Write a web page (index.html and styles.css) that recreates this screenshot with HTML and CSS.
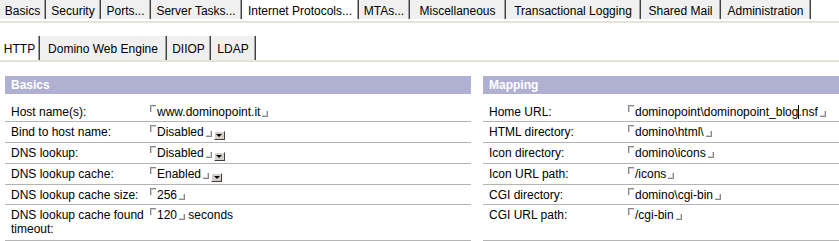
FILE: index.html
```html
<!DOCTYPE html>
<html>
<head>
<meta charset="utf-8">
<title>Server document - Internet Protocols - HTTP</title>
<link rel="stylesheet" href="styles.css">
</head>
<body>
<div class="tabbar main">
  <div class="tab t-basics">Basics</div>
  <div class="tab t-security">Security</div>
  <div class="tab t-ports">Ports...</div>
  <div class="tab t-tasks">Server Tasks...</div>
  <div class="tab t-inet active">Internet Protocols...</div>
  <div class="tab t-mtas">MTAs...</div>
  <div class="tab t-misc">Miscellaneous</div>
  <div class="tab t-txlog">Transactional Logging</div>
  <div class="tab t-shared">Shared Mail</div>
  <div class="tab t-admin">Administration</div>
</div>
<div class="tabbar sub">
  <div class="tab t-http active">HTTP</div>
  <div class="tab t-dwe">Domino Web Engine</div>
  <div class="tab t-diiop">DIIOP</div>
  <div class="tab t-ldap">LDAP</div>
</div>

<div class="form">
  <div class="bar">Basics</div>
  <div class="gap"></div>
  <div class="bar">Mapping</div>
  <div class="spacer"></div>

  <div class="cell label">Host name(s):</div>
  <div class="cell value"><span class="fld">www.dominopoint.it</span></div>
  <div class="gap"></div>
  <div class="cell label">Home URL:</div>
  <div class="cell value"><span class="fld">dominopoint\dominopoint_blog<span class="caret">.</span>nsf</span></div>

  <div class="cell label">Bind to host name:</div>
  <div class="cell value"><span class="fld">Disabled</span><span class="dd"></span></div>
  <div class="gap"></div>
  <div class="cell label">HTML directory:</div>
  <div class="cell value"><span class="fld">domino\html\</span></div>

  <div class="cell label">DNS lookup:</div>
  <div class="cell value"><span class="fld">Disabled</span><span class="dd"></span></div>
  <div class="gap"></div>
  <div class="cell label">Icon directory:</div>
  <div class="cell value"><span class="fld">domino\icons</span></div>

  <div class="cell label">DNS lookup cache:</div>
  <div class="cell value"><span class="fld">Enabled</span><span class="dd"></span></div>
  <div class="gap"></div>
  <div class="cell label">Icon URL path:</div>
  <div class="cell value"><span class="fld">/icons</span></div>

  <div class="cell label">DNS lookup cache size:</div>
  <div class="cell value"><span class="fld">256</span></div>
  <div class="gap"></div>
  <div class="cell label">CGI directory:</div>
  <div class="cell value"><span class="fld">domino\cgi-bin</span></div>

  <div class="cell label last">DNS lookup cache found timeout:</div>
  <div class="cell value last"><span class="fld">120</span> seconds</div>
  <div class="gap"></div>
  <div class="cell label last">CGI URL path:</div>
  <div class="cell value last"><span class="fld">/cgi-bin</span></div>
</div>
</body>
</html>
```

FILE: styles.css
```css
* {
  box-sizing: border-box;
}

body {
  margin: 0;
  background: #ffffff;
  color: #000000;
  font-family: "Liberation Sans", Arial, sans-serif;
  font-size: 12px;
}

/* ---------- tab bars ---------- */
.tabbar {
  display: flex;
  border-bottom: 2px solid #e4e4d8;
}

.tabbar.main {
  height: 23px;
  padding-bottom: 2px;
}

.tabbar.sub {
  margin-top: 13px;
  height: 26px;
}

.tab {
  flex: none;
  background: #f0f0f0;
  border-right: 1px solid #404040;
  box-shadow: inset -1px 0 #a0a0a0;
  text-align: center;
  white-space: nowrap;
  line-height: 14px;
}

.tab.active {
  background: #ffffff;
}

.main .tab {
  height: 19px;
  padding-top: 4px;
}

.sub .tab {
  height: 24px;
  padding-top: 6px;
}

.t-basics { width: 46px; }
.t-security { width: 55px; }
.t-ports { width: 50px; }
.t-tasks { width: 91px; }
.t-inet { width: 117px; }
.t-mtas { width: 51px; }
.t-misc { width: 96px; }
.t-txlog { width: 135px; }
.t-shared { width: 80px; }
.t-admin { width: 90px; }

.t-http { width: 40px; }
.t-dwe { width: 127px; }
.t-diiop { width: 44px; }
.t-ldap { width: 45px; }

/* ---------- form ---------- */
.form {
  display: grid;
  grid-template-columns: 143px 323px 12px 143px 1fr;
  margin: 14px 0 0 5px;
}

.bar {
  grid-column: span 2;
  height: 18px;
  line-height: 18px;
  padding-left: 6px;
  background: #b0b0d3;
  color: #ffffff;
  font-weight: bold;
}

.spacer {
  grid-column: 1 / -1;
  height: 8px;
}

.cell {
  padding: 3px 0 2px 6px;
  line-height: 14px;
  border-bottom: 1px solid #b4b4b4;
}

.cell.last {
  padding-bottom: 4px;
}

.cell.value {
  padding-left: 2px;
  white-space: nowrap;
}

/* Notes field delimiters */
.fld::before {
  content: "";
  display: inline-block;
  width: 5px;
  height: 6px;
  margin-right: 1px;
  vertical-align: top;
  border-top: 1px solid #888888;
  border-left: 1px solid #888888;
  box-shadow: inset 1px 1px #d0d0d0;
}

.fld::after {
  content: "";
  display: inline-block;
  width: 5px;
  height: 5px;
  margin-left: 2px;
  vertical-align: -1px;
  border-right: 1px solid #888888;
  border-bottom: 1px solid #888888;
  box-shadow: inset -1px -1px #d0d0d0;
}

.caret {
  position: relative;
}

.caret::after {
  content: "";
  position: absolute;
  left: 0;
  top: 0;
  width: 1px;
  height: 14px;
  background: #000000;
}

/* dropdown keyword button */
.dd {
  display: inline-flex;
  align-items: center;
  justify-content: center;
  width: 11px;
  height: 9px;
  margin-left: 2px;
  vertical-align: -1px;
  background: #d4d0c8;
  border: 1px solid;
  border-color: #ffffff #404040 #404040 #ffffff;
}

.dd::after {
  content: "";
  border-left: 3px solid transparent;
  border-right: 3px solid transparent;
  border-top: 3px solid #000000;
}
```
